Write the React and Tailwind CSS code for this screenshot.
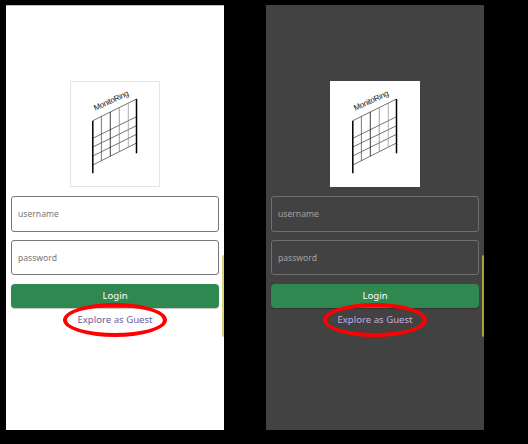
const themes = {
  light: {
    panel: "bg-white border-t border-[#bdbdbd]",
    logo: "border border-[#e4e4e4]",
    input: "border-[#777777] text-[#777777]",
    link: "text-[#6d5b9c]",
    handle: "bg-[#d6d57b]",
  },
  dark: {
    panel: "bg-[#424242] border-t border-[#424242]",
    logo: "border border-white",
    input: "border-[#707070] text-[#a3a3a3]",
    link: "text-[#c3addf]",
    handle: "bg-[#a8a43a]",
  },
};

const rows = [
  [39.7, 18],
  [57.3, 35.7],
  [66, 44.7],
  [75, 53.3],
  [84, 62],
];

const columns = [
  [31.4, 35.4, 79.7, "#555"],
  [40.3, 31, 75.2, "#111"],
  [49.3, 26.5, 70.6, "#888"],
  [58.3, 22, 66.1, "#999"],
];

function Logo({ className }) {
  return (
    <div className={`h-[106px] w-[90px] bg-white ${className}`}>
      <svg viewBox="0 0 90 106" className="-m-px block h-[106px] w-[90px]">
        <text
          transform="translate(25.2 29.8) rotate(-24.5)"
          fontFamily="Liberation Sans, sans-serif"
          fontSize="8"
          textLength="37.5"
          fill="#222"
        >
          MonitoRing
        </text>
        {rows.map(([left, right]) => (
          <line key={left} x1="22.8" y1={left} x2="66.5" y2={right} stroke="#444" strokeWidth="0.75" />
        ))}
        {columns.map(([x, top, bottom, color]) => (
          <line key={x} x1={x} y1={top} x2={x} y2={bottom} stroke={color} strokeWidth="0.8" />
        ))}
        <line x1="22.8" y1="39.7" x2="22.8" y2="92.3" stroke="#000" strokeWidth="1.5" />
        <line x1="66.5" y1="18" x2="66.5" y2="72.3" stroke="#000" strokeWidth="1.5" />
      </svg>
    </div>
  );
}

function Field({ label, className }) {
  return (
    <div className={`flex h-[35.5px] w-full items-center rounded-[3px] border pl-1.5 pt-[2px] text-[8.6px] ${className}`}>
      {label}
    </div>
  );
}

function LoginScreen({ theme }) {
  const t = themes[theme];
  return (
    <section className={`relative flex h-[425px] w-[218px] flex-col items-center px-[5px] pt-[75px] ${t.panel}`}>
      <Logo className={t.logo} />
      <div className="mt-[9px] flex w-full flex-col gap-[8.4px]">
        <Field label="username" className={t.input} />
        <Field label="password" className={t.input} />
        <button className="flex h-6 w-full items-center justify-center rounded bg-[#2f884f] text-[9.6px] text-white shadow-[0_1px_1px_rgba(0,0,0,0.25)]">
          Login
        </button>
      </div>
      <a className={`relative mt-[5px] whitespace-nowrap text-[9.6px] leading-[14px] ${t.link}`}>
        Explore as Guest
        <span className="absolute left-1/2 top-1/2 h-[34px] w-[104px] -translate-x-1/2 -translate-y-1/2 rounded-[50%] border-4 border-[#ff0000]" />
      </a>
      <span className={`absolute right-0 top-[249px] h-[82px] w-[2px] rounded-l-sm ${t.handle}`} />
    </section>
  );
}

export default function App() {
  return (
    <main className="flex h-[444px] w-[528px] gap-[42px] bg-black pl-1.5 pt-[5px] font-['Noto_Sans',sans-serif]">
      <LoginScreen theme="light" />
      <LoginScreen theme="dark" />
    </main>
  );
}
